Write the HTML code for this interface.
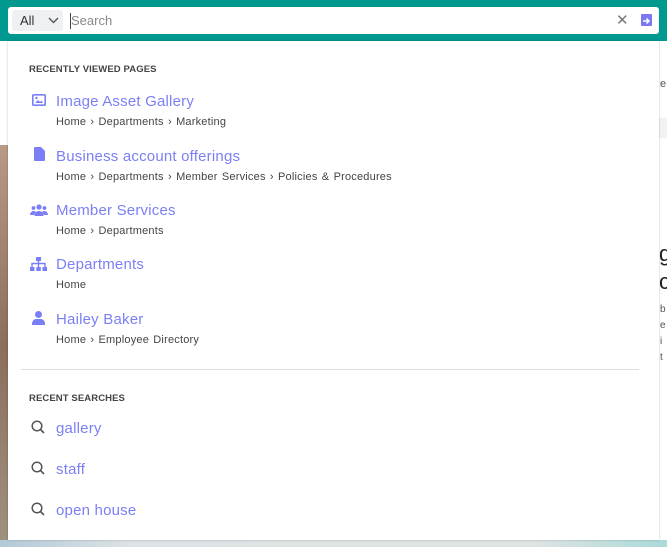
<!DOCTYPE html>
<html><head><meta charset="utf-8"><style>
*{margin:0;padding:0;box-sizing:border-box}
body{width:667px;height:547px;overflow:hidden;position:relative;background:#fff;font-family:"Liberation Sans",sans-serif}
.bg-left{position:absolute;left:0;top:145px;width:8px;height:400px;background:linear-gradient(#b89a86,#8c6e5c 50%,#a0917f)}
.bg-right{position:absolute;left:659px;top:40px;width:8px;height:507px;background:#fff}
.rbar{position:absolute;left:659px;top:118px;width:8px;height:20px;background:#f2f2f2}
.bottom{position:absolute;left:0;top:540px;width:667px;height:7px;background:linear-gradient(90deg,#b3c9d8,#dde3e5 20%,#dfe3e3 80%,#a9dad8)}
.top{position:absolute;left:0;top:0;width:667px;height:41px;background:#00998f}
.bar{position:absolute;left:8px;top:7px;width:651px;height:27px;background:#fff;border-radius:3px}
.all{position:absolute;left:4px;top:3px;width:51px;height:21px;background:#eef0f3;border-radius:3px;font-size:13px;color:#333;padding:3px 0 0 8px}
.all svg{position:absolute;left:36px;top:7px}
.caret{position:absolute;left:62px;top:6px;width:1px;height:16px;background:#444}
.ph{position:absolute;left:63px;top:6px;font-size:13px;color:#888}
.x{position:absolute;left:608px;top:4px;font-size:15px;color:#777}
.go{position:absolute;left:633px;top:7px;width:11px;height:12px;background:#7a78f2;border-radius:1px}
.panel{position:absolute;left:8px;top:41px;width:651px;height:499px;background:#fff;box-shadow:0 0 2px rgba(0,0,0,.25)}
.h{position:absolute;left:21px;font-size:9.5px;font-weight:bold;color:#444;letter-spacing:.1px}
.t{position:absolute;left:48px;font-size:15px;color:#7b7ff5;letter-spacing:.2px}
.c{position:absolute;left:48px;font-size:11px;color:#444;letter-spacing:.2px;word-spacing:1px}
.ic{position:absolute;left:24px;fill:#7b7ff5}
.hr{position:absolute;left:13px;top:328px;width:618px;height:1px;background:#ddd}
.s{position:absolute;left:23px}
</style></head><body>
<div class="bg-left"></div><div class="bg-right"></div><div class="rbar"></div>
<div style="position:absolute;left:660px;top:78px;font-size:11px;color:#555">e</div>
<div style="position:absolute;left:659px;top:240px;font-size:22px;color:#222;line-height:28px">g<br>c</div>
<div style="position:absolute;left:660px;top:302px;font-size:10px;color:#555;line-height:16px">b<br>e<br>i<br>t</div>
<div class="bottom"></div>
<div class="top"><div class="bar">
<div class="all">All<svg width="11" height="7" viewBox="0 0 11 7"><path d="M1 1l4.5 4.5L10 1" stroke="#555" stroke-width="1.4" fill="none"/></svg></div>
<div class="caret"></div><div class="ph">Search</div>
<div class="x">✕</div>
<div class="go"><svg width="11" height="12" viewBox="0 0 11 12"><path d="M2 6h6M5.5 3.5L8 6 5.5 8.5" stroke="#fff" stroke-width="1.5" fill="none"/></svg></div>
</div></div>
<div class="panel">
<div class="h" style="top:23px">RECENTLY VIEWED PAGES</div>
<svg class="ic" style="top:53px" width="14" height="12" viewBox="0 0 14 12"><rect x="0.8" y="0.8" width="12.4" height="10.4" rx="1" fill="none" stroke="#7b7ff5" stroke-width="1.6"/><path d="M3 9l3-3 2 2 1.5-1.5L11 9z"/><circle cx="4.5" cy="4" r="1.2"/></svg>
<div class="t" style="top:52px">Image Asset Gallery</div>
<div class="c" style="top:75px">Home › Departments › Marketing</div>
<svg class="ic" style="top:106px;left:26px" width="11" height="14" viewBox="0 0 11 14"><path d="M0 1a1 1 0 0 1 1-1h6l4 4v9a1 1 0 0 1-1 1H1a1 1 0 0 1-1-1z"/></svg>
<div class="t" style="top:107px">Business account offerings</div>
<div class="c" style="top:130px">Home › Departments › Member Services › Policies &amp; Procedures</div>
<svg class="ic" style="top:163px;left:22px" width="18" height="12" viewBox="0 0 18 12"><circle cx="9" cy="3" r="2.6"/><circle cx="3.5" cy="4" r="1.9"/><circle cx="14.5" cy="4" r="1.9"/><path d="M4.5 12c0-3 2-5 4.5-5s4.5 2 4.5 5z"/><path d="M0 11c0-2 1.5-4 3.5-4s2.5 1 2.5 1L4 11z"/><path d="M18 11c0-2-1.5-4-3.5-4s-2.5 1-2.5 1L14 11z"/></svg>
<div class="t" style="top:161px">Member Services</div>
<div class="c" style="top:184px">Home › Departments</div>
<svg class="ic" style="top:216px;left:22px" width="17" height="14" viewBox="0 0 17 14"><rect x="6" y="0" width="5" height="4"/><rect x="0" y="10" width="4.5" height="4"/><rect x="6.3" y="10" width="4.5" height="4"/><rect x="12.5" y="10" width="4.5" height="4"/><path d="M2 10V6.5h13V10M8.5 4v6" stroke="#7b7ff5" stroke-width="1.4" fill="none"/></svg>
<div class="t" style="top:215px">Departments</div>
<div class="c" style="top:238px">Home</div>
<svg class="ic" style="top:270px;left:24px" width="13" height="14" viewBox="0 0 13 14"><circle cx="6.5" cy="3.5" r="3.5"/><path d="M0 13c0-3 2-5 4-5h5c2 0 4 2 4 5v1H0z"/></svg>
<div class="t" style="top:270px">Hailey Baker</div>
<div class="c" style="top:293px">Home › Employee Directory</div>
<div class="hr"></div>
<div class="h" style="top:352px">RECENT SEARCHES</div>
<svg class="s" style="top:379px" width="14" height="14" viewBox="0 0 14 14"><circle cx="6" cy="6" r="4.8" fill="none" stroke="#555" stroke-width="1.5"/><path d="M9.5 9.5L13 13" stroke="#555" stroke-width="1.6"/></svg>
<div class="t" style="top:379px">gallery</div>
<svg class="s" style="top:420px" width="14" height="14" viewBox="0 0 14 14"><circle cx="6" cy="6" r="4.8" fill="none" stroke="#555" stroke-width="1.5"/><path d="M9.5 9.5L13 13" stroke="#555" stroke-width="1.6"/></svg>
<div class="t" style="top:420px">staff</div>
<svg class="s" style="top:461px" width="14" height="14" viewBox="0 0 14 14"><circle cx="6" cy="6" r="4.8" fill="none" stroke="#555" stroke-width="1.5"/><path d="M9.5 9.5L13 13" stroke="#555" stroke-width="1.6"/></svg>
<div class="t" style="top:461px">open house</div>
</div>
</body></html>
